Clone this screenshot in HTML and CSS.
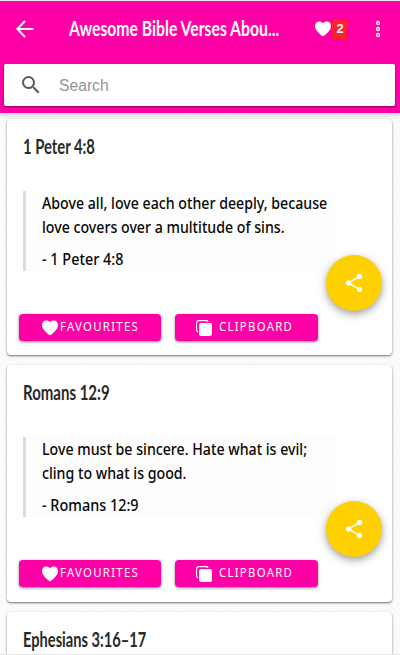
FILE: index.html
```html
<!DOCTYPE html>
<html lang="en">
<head>
<meta charset="utf-8">
<title>Awesome Bible Verses</title>
<link rel="stylesheet" href="styles.css">
</head>
<body>
<svg class="defs" aria-hidden="true">
  <symbol id="heart" viewBox="0 0 16 16"><path d="M8 15.6C6 14.3 0 9.8 0 5.1 0 2.2 1.8.4 4.1.4 5.8.4 7.2 1 8 2.2 8.8 1 10.2.4 11.9.4 14.2.4 16 2.2 16 5.1 16 9.8 10 14.3 8 15.6Z"/></symbol>
  <symbol id="copy" viewBox="0 0 16 16"><path d="M2 12.2C.9 11.5.6 10.8.6 9.5V3C.6 1.5 1.5.6 3 .6H10C11 .6 11.7.9 12.2 1.7" fill="none" stroke="#fff" stroke-width="1.1"/><rect x="3" y="3" width="13" height="13" rx="2"/></symbol>
  <symbol id="share" viewBox="0 0 24 24"><path d="M18 16.08c-.76 0-1.44.3-1.96.77L8.91 12.7c.05-.23.09-.46.09-.7s-.04-.47-.09-.7l7.05-4.11c.54.5 1.25.81 2.04.81 1.66 0 3-1.34 3-3s-1.34-3-3-3-3 1.34-3 3c0 .24.04.47.09.7L8.04 9.81C7.5 9.31 6.79 9 6 9c-1.66 0-3 1.34-3 3s1.34 3 3 3c.79 0 1.5-.31 2.04-.81l7.12 4.16c-.05.21-.08.43-.08.65 0 1.61 1.31 2.92 2.92 2.92s2.92-1.31 2.92-2.92-1.31-2.92-2.92-2.92z"/></symbol>
</svg>
<header class="header">
  <div class="toolbar">
    <svg class="back" viewBox="0 0 18 18"><path d="M17.5 9H1.5M9 1 1.3 9 9 17"/></svg>
    <h1 class="title"><span>Awesome Bible Verses Abou...</span></h1>
    <svg class="heart"><use href="#heart"/></svg>
    <span class="count">2</span>
    <svg class="more" viewBox="0 0 6 18"><circle cx="3" cy="3" r="1.5"/><circle cx="3" cy="9" r="1.5"/><circle cx="3" cy="15" r="1.5"/></svg>
  </div>
  <div class="search">
    <svg class="lens" viewBox="3 3 18 18"><path d="M15.5 14h-.79l-.28-.27A6.47 6.47 0 0 0 16 9.5 6.5 6.5 0 1 0 9.5 16c1.61 0 3.09-.59 4.23-1.57l.27.28v.79l5 4.99L20.49 19l-4.99-5zm-6 0C7.01 14 5 11.99 5 9.5S7.01 5 9.5 5 14 7.01 14 9.5 11.99 14 9.5 14z"/></svg>
    <span class="placeholder">Search</span>
  </div>
</header>
<main class="list">
  <article class="card">
    <h2><span class="h-peter">1 Peter 4:8</span></h2>
    <blockquote>
      <p><span>Above all, love each other deeply, because</span><br><span>love covers over a multitude of sins.</span></p>
      <p class="source"><span>- 1 Peter 4:8</span></p>
    </blockquote>
    <div class="actions">
      <div class="button"><svg class="icon"><use href="#heart"/></svg><span class="label">FAVOURITES</span></div>
      <div class="button clip"><svg class="icon"><use href="#copy"/></svg><span class="label">CLIPBOARD</span></div>
    </div>
    <div class="fab"><svg><use href="#share"/></svg></div>
  </article>
  <article class="card second">
    <h2><span class="h-romans">Romans 12:9</span></h2>
    <blockquote>
      <p><span>Love must be sincere. Hate what is evil;</span><br><span>cling to what is good.</span></p>
      <p class="source"><span>- Romans 12:9</span></p>
    </blockquote>
    <div class="actions">
      <div class="button"><svg class="icon"><use href="#heart"/></svg><span class="label">FAVOURITES</span></div>
      <div class="button clip"><svg class="icon"><use href="#copy"/></svg><span class="label">CLIPBOARD</span></div>
    </div>
    <div class="fab"><svg><use href="#share"/></svg></div>
  </article>
  <article class="card last">
    <h2><span class="h-eph">Ephesians 3:16–17</span></h2>
  </article>
</main>
</body>
</html>
```
FILE: styles.css
```css
* { box-sizing: border-box; }
html, body { margin: 0; height: 655px; overflow: hidden; }
body {
  display: flex; flex-direction: column;
  border-top: 1px solid #e8e8e8; border-bottom: 1px solid #e6e6e6;
  background: repeating-linear-gradient(45deg, #fcfcfc 0 2px, #f9f9f9 2px 4px);
  font-family: "Noto Sans", sans-serif;
}
.defs { position: absolute; width: 0; height: 0; }
svg { display: block; flex: none; fill: #fff; }
h1, h2, p, blockquote { margin: 0; }
h1 span, h2 span, p span, .label, .placeholder { display: inline-block; transform-origin: 0 50%; white-space: nowrap; }

.header { position: relative; z-index: 1; flex: none; height: 112px; background: #ff00a6; box-shadow: 0 2px 5px rgba(0,0,0,.2); }
.toolbar { display: flex; align-items: center; height: 56px; padding-left: 16px; }
.back { width: 18px; height: 18px; fill: none; stroke: #fff; stroke-width: 2; }
.title { width: 246px; margin-left: 35px; padding-bottom: 2px; color: #fff; font: bold 20px/26px Lato, sans-serif; }
.title span { transform: scaleX(.788); }
.heart { width: 16px; height: 16px; }
.count { width: 16px; height: 20px; margin-left: 1px; border-radius: 3px; background: #ff1f2d; color: #fff; font: bold 13px/19px "Liberation Sans", sans-serif; text-align: center; }
.more { width: 6px; height: 18px; margin-left: 27px; fill: none; stroke: #fff; stroke-width: 1.3; }
.search { display: flex; align-items: center; height: 42px; margin: 7px 5px 0 4px; padding-left: 18px; border-radius: 2px; background: #fff; box-shadow: 0 1px 2px rgba(0,0,0,.5); }
.lens { width: 18px; height: 18px; fill: #5b5b5b; }
.placeholder { margin-left: 19px; padding-top: 1px; color: #949494; font: 16px/24px "Liberation Sans", sans-serif; transform: scaleX(.98); }

.list { flex: 1; min-height: 0; overflow: hidden; padding: 6px 8px 0 7px; }
.card { position: relative; height: 236px; margin-bottom: 10px; padding: 13px 12px 0; border-radius: 4px; background: #fff; box-shadow: 0 1px 2px rgba(0,0,0,.5), 0 1px 4px rgba(0,0,0,.08); }
.second { height: 237px; }
.last { height: 42px; margin-bottom: 0; border-radius: 4px 4px 0 0; }
h2 { height: 28px; padding-left: 4px; color: #292929; font: bold 20px/28px Lato, sans-serif; }
h2 .h-peter { transform: scaleX(.74); }
h2 .h-romans { transform: scaleX(.75); }
h2 .h-eph { transform: scaleX(.732); }
blockquote { width: 313px; height: 80px; margin: 31px 0 0 4px; padding-left: 16px; border-left: 3px solid #dcdcdc; background: #fdfdfd; color: #080808; font-size: 16px; font-weight: 500; line-height: 24px; }
p span { transform: scaleX(.886); }
.source { margin-top: 8px; }
.source span { transform: scaleX(.9); }
.actions { display: flex; gap: 14px; margin-top: 43px; }
.button { display: flex; align-items: center; width: 142px; height: 27px; padding-left: 23px; border-radius: 4px; background: #ff00a6; box-shadow: 0 1px 3px rgba(0,0,0,.5); color: #fff; }
.icon { width: 16px; height: 16px; }
.label { margin-left: 2px; padding-bottom: 3px; font-size: 13px; line-height: 24px; letter-spacing: 1.5px; transform: scaleX(.872); }
.clip { width: 143px; padding-left: 21px; }
.clip .label { margin-left: 7px; }
.fab { position: absolute; right: 10px; top: 136px; width: 56px; height: 56px; padding: 17px; border-radius: 50%; background: #ffd000; box-shadow: 0 3px 6px rgba(0,0,0,.25), 0 3px 12px rgba(0,0,0,.16); }
.fab svg { width: 22px; height: 22px; }
```
